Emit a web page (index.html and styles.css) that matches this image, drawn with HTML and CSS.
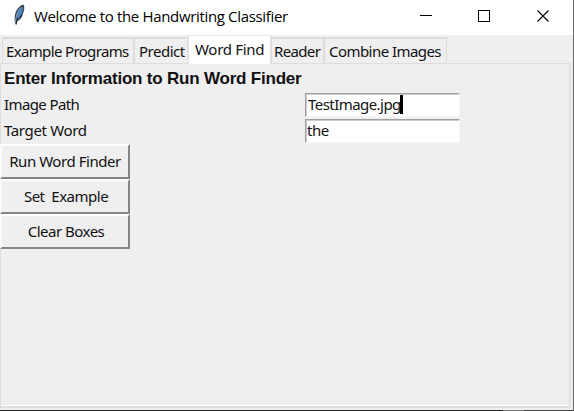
FILE: index.html
```html
<!DOCTYPE html>
<html lang="en">
<head>
<meta charset="utf-8">
<title>Welcome to the Handwriting Classifier</title>
<link rel="stylesheet" href="styles.css">
</head>
<body>
<div class="window">
  <header class="titlebar">
    <svg class="feather" width="16" height="22" viewBox="0 0 16 22">
      <path d="M3.500 20C1.500 14 3 7 7 3Q10 0 12 1Q13 6 10 12Q8 17 4.500 17Z" fill="#35485c"/>
      <path d="M5 14Q5 6 11 3Q11 9 7 14Z" fill="#4c83c5"/>
      <path d="M3.500 18Q4 9 9 3" fill="none" stroke="#a9b8c8" stroke-width=".8"/>
      <path d="M4 20.500L5 16M8 14L10 11" stroke="#222" stroke-width="1.200"/>
    </svg>
    <h1 class="title"><span>Welcome to the Handwriting Classifier</span></h1>
    <svg class="controls" width="130" height="14" viewBox="0 0 130 14" fill="none" stroke="#000" shape-rendering="crispEdges">
      <path d="M0 6.500H12M58.500 1.500H69.500V12.500H58.500Z"/>
      <path d="M117.500 1.500L128.500 12.500M128.500 1.500L117.500 12.500" shape-rendering="auto" stroke-width="1.100"/>
    </svg>
  </header>
  <nav class="tabs">
    <div class="tab tab-examples"><span>Example Programs</span></div>
    <div class="tab tab-predict"><span>Predict</span></div>
    <div class="tab tab-find selected"><span>Word Find</span></div>
    <div class="tab tab-reader"><span>Reader</span></div>
    <div class="tab tab-combine"><span>Combine Images</span></div>
  </nav>
  <main class="pane">
    <h2 class="heading"><span>Enter Information to Run Word Finder</span></h2>
    <div class="row"><label class="label-path">Image Path</label><div class="entry"><span class="path">TestImage.jpg</span><i class="caret"></i></div></div>
    <div class="row"><label class="label-word">Target Word</label><div class="entry"><span class="word">the</span></div></div>
    <div class="actions">
      <button class="run">Run Word Finder</button>
      <button class="set">Set&nbsp; Example</button>
      <button class="clear">Clear Boxes</button>
    </div>
  </main>
  <div class="bottom"><i></i><b></b></div>
</div>
</body>
</html>
```
FILE: styles.css
```css
* { box-sizing: border-box; }
body { margin: 0; overflow: hidden; color: #111; font: 15px "Noto Sans", sans-serif; }
.window { width: 574px; height: 411px; display: flex; flex-direction: column; background: #efefef; border-right: 1px solid #666; }
.titlebar { height: 35px; flex: none; display: flex; background: #fff; }
.feather { margin: 4px 0 0 12px; }
.title { margin: 0 0 0 6px; width: 386px; font: 15px/32px "Open Sans", sans-serif; color: #000; white-space: pre; letter-spacing: -.34px; }
.controls { margin-top: 9px; }
.tabs { height: 28px; flex: none; display: flex; align-items: flex-end; padding-left: 2px; }
.tab { height: 26px; border: 1px solid #dcdcdc; border-width: 2px 1px 0 1px; padding-left: 3px; line-height: 25px; white-space: pre; letter-spacing: -.65px; }
.tab-examples { width: 132px; }
.tab-predict { width: 54px; padding-left: 4px; letter-spacing: -.5px; }
.tab-find { width: 83px; letter-spacing: -.3px; }
.tab-reader { width: 53px; padding-left: 2px; }
.tab-combine { width: 123px; padding-left: 4px; letter-spacing: -.55px; }
.tab.selected { height: 29px; background: #fff; border-color: #e5e5e5; border-width: 1px 1px 0; padding-left: 6px; line-height: 26px; margin-bottom: -1px; position: relative; }
.pane { width: 571px; height: 345px; flex: none; border: 1px solid #dedede; border-right: 2px solid #e1e1e1; border-bottom: 2px solid #dedede; box-shadow: inset 0 -1px #fff; }
.heading { margin: 0; height: 28px; padding-left: 3px; font: bold 17px/29px "Liberation Sans", sans-serif; white-space: pre; letter-spacing: -.2px; }
.row { height: 26px; display: flex; align-items: flex-start; }
.row label { width: 304px; padding-left: 3px; line-height: 25px; letter-spacing: -.6px; }
.row .label-word { letter-spacing: -.35px; }
.entry { width: 155px; height: 24px; margin-top: 1px; display: flex; border: 1px solid #f7f7f7; border-top: 1px solid #a0a0a0; border-left: 1px solid #a0a0a0; box-shadow: inset 1px 1px #ccc; background: #fff; padding: 1px 0 0 2px; line-height: 19px; letter-spacing: -.55px; }
.entry .word { letter-spacing: -.5px; margin-left: -1px; }
.caret { width: 3px; height: 19px; background: #000; margin-left: -1px; }
.actions { width: 131px; margin: 0 0 0 -1px; display: flex; flex-direction: column; }
.actions button { width: 130px; height: 35px; border: 2px solid; border-color: #fff #858585 #858585 #fafafa; border-radius: 0; background: #efefef; color: #111; padding: 0; font: 15px/28px "Noto Sans", sans-serif; letter-spacing: -.45px; padding-bottom: 2px; }
.actions .set, .actions .clear { letter-spacing: -.5px; padding-left: 2px; }
.bottom { height: 1px; margin-top: auto; background: #222; display: flex; }
.bottom i { width: 21px; margin-left: 503px; background: #777; }
.bottom b { width: 50px; background: #444; }
```
